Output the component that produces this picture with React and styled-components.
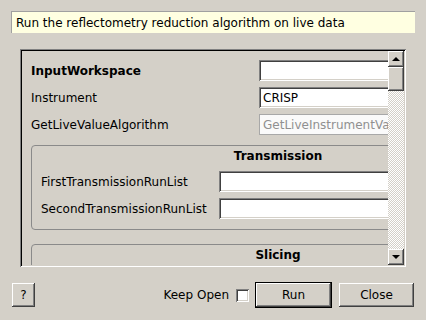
import React from 'react'
import styled, { createGlobalStyle } from 'styled-components'

const GlobalStyle = createGlobalStyle`
  html, body {
    margin: 0;
    padding: 0;
    background: #d4d0c8;
  }
  body {
    font-family: "DejaVu Sans", "Liberation Sans", sans-serif;
    font-size: 12px;
    color: #000;
  }
`

const Dialog = styled.div`
  width: 426px;
  height: 320px;
  box-sizing: border-box;
  padding: 11px 11px 0 11px;
  display: flex;
  flex-direction: column;
  background: #d4d0c8;
`

const Description = styled.div`
  height: 22px;
  box-sizing: border-box;
  background: #ffffe1;
  border-top: 1px solid #a0a0a0;
  border-left: 1px solid #a0a0a0;
  padding-left: 4px;
  display: flex;
  align-items: center;
  white-space: nowrap;
`

const ScrollFrame = styled.div`
  margin: 16px 9px 0 9px;
  height: 218px;
  box-sizing: border-box;
  display: flex;
  box-shadow: inset 1px 1px #808080, inset -1px -1px #ffffff, inset 2px 2px #000000, inset -2px -2px #d4d0c8;
  padding: 2px;
`

const Viewport = styled.div`
  flex: 1;
  overflow: hidden;
  position: relative;
`

const Content = styled.div`
  width: 520px;
  box-sizing: border-box;
  padding: 9px 0 0 9px;
  display: flex;
  flex-direction: column;
`

const Row = styled.div`
  display: flex;
  align-items: center;
  height: 21px;
  margin-bottom: 6px;
`

const Label = styled.div`
  width: ${({ $w }) => $w}px;
  flex-shrink: 0;
  font-weight: ${({ $bold }) => ($bold ? 'bold' : 'normal')};
  white-space: nowrap;
`

const Field = styled.div`
  flex: 1;
  height: 21px;
  box-sizing: border-box;
  background: #ffffff;
  box-shadow: inset 1px 1px #808080, inset -1px -1px #ffffff, inset 2px 2px #404040, inset -2px -2px #d4d0c8;
  padding: 0 4px;
  display: flex;
  align-items: center;
  white-space: nowrap;
  overflow: hidden;
  color: #000;
`

const DisabledField = styled(Field)`
  background: #fafafa;
  box-shadow: inset 0 0 0 1px #a8a8a8;
  color: #909090;
`

const Group = styled.div`
  width: 494px;
  box-sizing: border-box;
  border: 1px solid #8a8a8a;
  border-radius: 4px;
  margin-top: ${({ $top }) => $top}px;
  padding: 0 0 4px 9px;
  display: flex;
  flex-direction: column;
`

const GroupTitle = styled.div`
  font-weight: bold;
  text-align: center;
  height: 21px;
  line-height: 21px;
  margin-bottom: 4px;
  padding-right: 9px;
`

const GroupFields = styled.div`
  padding-right: 10px;
`

const ScrollBar = styled.div`
  width: 16px;
  display: flex;
  flex-direction: column;
`

const ScrollButton = styled.div`
  height: 16px;
  box-sizing: border-box;
  background: #d4d0c8;
  box-shadow: inset -1px -1px #404040, inset 1px 1px #ffffff, inset -2px -2px #808080;
  display: flex;
  align-items: center;
  justify-content: center;
`

const Arrow = styled.div`
  width: 0;
  height: 0;
  border-left: 4px solid transparent;
  border-right: 4px solid transparent;
  ${({ $up }) => ($up ? 'border-bottom: 4px solid #000;' : 'border-top: 4px solid #000;')}
`

const Handle = styled.div`
  height: 24px;
  box-sizing: border-box;
  background: #d4d0c8;
  box-shadow: inset -1px -1px #404040, inset 1px 1px #ffffff, inset -2px -2px #808080;
`

const Track = styled.div`
  flex: 1;
  background-image: repeating-conic-gradient(#ffffff 0 25%, #d4d0c8 0 50%);
  background-size: 2px 2px;
`

const ButtonBar = styled.div`
  margin-top: 15px;
  height: 26px;
  display: flex;
  align-items: center;
  padding: 0 1px 0 1px;
`

const Button = styled.div`
  width: ${({ $w }) => $w}px;
  height: 24px;
  box-sizing: border-box;
  background: #d4d0c8;
  box-shadow: inset -1px -1px #404040, inset 1px 1px #ffffff, inset -2px -2px #808080;
  display: flex;
  align-items: center;
  justify-content: center;
  padding-bottom: 1px;
  margin-left: ${({ $gap }) => $gap || 0}px;
`

const DefaultButton = styled(Button)`
  height: 26px;
  box-shadow: inset 0 0 0 1px #000, inset -2px -2px #404040, inset 2px 2px #ffffff, inset -3px -3px #808080;
`

const Spacer = styled.div`
  flex: 1;
`

const CheckLabel = styled.div`
  margin-right: 7px;
`

const CheckBox = styled.div`
  width: 13px;
  height: 13px;
  box-sizing: border-box;
  background: #ffffff;
  box-shadow: inset 1px 1px #808080, inset -1px -1px #ffffff, inset 2px 2px #404040, inset -2px -2px #d4d0c8;
  margin-right: 6px;
`

export default function App() {
  return (
    <>
      <GlobalStyle />
      <Dialog>
        <Description>Run the reflectometry reduction algorithm on live data</Description>
        <ScrollFrame>
          <Viewport>
            <Content>
              <Row>
                <Label $w={228} $bold>InputWorkspace</Label>
                <Field />
              </Row>
              <Row>
                <Label $w={228}>Instrument</Label>
                <Field>CRISP</Field>
              </Row>
              <Row>
                <Label $w={228}>GetLiveValueAlgorithm</Label>
                <DisabledField>GetLiveInstrumentValue</DisabledField>
              </Row>
              <Group $top={4}>
                <GroupTitle>Transmission</GroupTitle>
                <GroupFields>
                  <Row>
                    <Label $w={178}>FirstTransmissionRunList</Label>
                    <Field />
                  </Row>
                  <Row>
                    <Label $w={178}>SecondTransmissionRunList</Label>
                    <Field />
                  </Row>
                </GroupFields>
              </Group>
              <Group $top={14}>
                <GroupTitle>Slicing</GroupTitle>
              </Group>
            </Content>
          </Viewport>
          <ScrollBar>
            <ScrollButton><Arrow $up /></ScrollButton>
            <Handle />
            <Track />
            <ScrollButton><Arrow /></ScrollButton>
          </ScrollBar>
        </ScrollFrame>
        <ButtonBar>
          <Button $w={23}>?</Button>
          <Spacer />
          <CheckLabel>Keep Open</CheckLabel>
          <CheckBox />
          <DefaultButton $w={77}>Run</DefaultButton>
          <Button $w={75} $gap={7}>Close</Button>
        </ButtonBar>
      </Dialog>
    </>
  )
}
